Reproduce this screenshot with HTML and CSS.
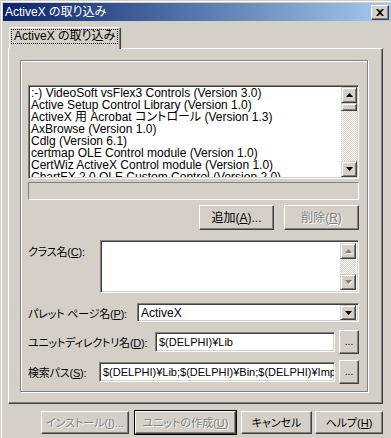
FILE: index.html
```html
<!DOCTYPE html>
<html>
<head>
    <title>ActiveX の取り込み</title>
    <meta charset="utf-8">
    <link rel="stylesheet" href="styles.css">
</head>
<body>
    <div class="window">
        <div class="titlebar">
            <span class="title">ActiveX の取り込み</span>
            <span class="close">
                <svg width="8" height="7" viewBox="0 0 8 7"><path d="M0 0h2l2 2 2-2h2L5 3.5 8 7H6L4 5 2 7H0l3-3.5z" fill="#000"/></svg>
            </span>
        </div>

        <div class="client">
            <div class="tabstrip">
                <div class="tab"><span class="focus">ActiveX の取り込み</span></div>
            </div>

            <div class="page">
                <div class="frame">
                    <div class="listbox">
                        <div class="items">
                            <div>:-) VideoSoft vsFlex3 Controls (Version 3.0)</div>
                            <div>Active Setup Control Library (Version 1.0)</div>
                            <div>ActiveX 用 Acrobat コントロール (Version 1.3)</div>
                            <div>AxBrowse (Version 1.0)</div>
                            <div>Cdlg (Version 6.1)</div>
                            <div>certmap OLE Control module (Version 1.0)</div>
                            <div>CertWiz ActiveX Control module (Version 1.0)</div>
                            <div>ChartFX 2.0 OLE Custom Control (Version 2.0)</div>
                        </div>
                        <div class="vscroll">
                            <div class="sbtn"><svg width="7" height="4" viewBox="0 0 7 4"><path d="M3.5 0L7 4H0z"/></svg></div>
                            <div class="thumb"></div>
                            <div class="track"></div>
                            <div class="sbtn"><svg width="7" height="4" viewBox="0 0 7 4"><path d="M0 0h7L3.5 4z"/></svg></div>
                        </div>
                    </div>

                    <div class="status"></div>

                    <div class="btn-row">
                        <button class="btn">追加(<u>A</u>)...</button>
                        <button class="btn" disabled>削除(<u>R</u>)</button>
                    </div>

                    <div class="field field-class">
                        <label class="lbl">クラス名(<u>C</u>):</label>
                        <div class="classbox">
                            <div class="items"></div>
                            <div class="vscroll">
                                <div class="sbtn off"><svg width="7" height="4" viewBox="0 0 7 4"><path d="M3.5 0L7 4H0z"/></svg></div>
                                <div class="track"></div>
                                <div class="sbtn off"><svg width="7" height="4" viewBox="0 0 7 4"><path d="M0 0h7L3.5 4z"/></svg></div>
                            </div>
                        </div>
                    </div>

                    <div class="field field-palette">
                        <label class="lbl">パレット ページ名(<u>P</u>):</label>
                        <div class="combo">
                            <span class="value">ActiveX</span>
                            <div class="sbtn"><svg width="7" height="4" viewBox="0 0 7 4"><path d="M0 0h7L3.5 4z"/></svg></div>
                        </div>
                    </div>

                    <div class="field field-path">
                        <label class="lbl">ユニットディレクトリ名(<u>D</u>):</label>
                        <div class="edit unit-edit">$(DELPHI)¥Lib</div>
                        <button class="btn dots">...</button>
                    </div>

                    <div class="field field-path">
                        <label class="lbl">検索パス(<u>S</u>):</label>
                        <div class="edit search-edit">$(DELPHI)¥Lib;$(DELPHI)¥Bin;$(DELPHI)¥Imp</div>
                        <button class="btn dots">...</button>
                    </div>
                </div>
            </div>

            <div class="actions">
                <button class="btn btn-install" disabled>インストール(<u>I</u>)...</button>
                <button class="btn btn-unit default" disabled>ユニットの作成(<u>U</u>)</button>
                <button class="btn btn-cancel">キャンセル</button>
                <button class="btn btn-help">ヘルプ(<u>H</u>)</button>
            </div>
        </div>
    </div>
</body>
</html>
```

FILE: styles.css
```css
body {
    margin: 0;
    background: #d4d0c8;
    font-family: 'Liberation Sans', 'Noto Sans CJK JP', sans-serif;
    font-size: 12px;
    font-feature-settings: "palt";
    color: #000;
}
.window {
    width: 391px;
    height: 438px;
    box-sizing: border-box;
    border-left: 1px solid #d4d0c8;
    border-top: 1px solid #d4d0c8;
    padding: 2px 0 0 2px;
    box-shadow: inset 1px 1px #fff;
    overflow: hidden;
}
.titlebar {
    height: 18px;
    display: flex;
    align-items: center;
    justify-content: space-between;
    background: linear-gradient(90deg, #0a246a 0%, #a6caf0 100%);
    padding: 0 2px 0 2px;
}
.title {
    color: #fff;
    line-height: 18px;
}
.close {
    width: 16px;
    height: 13px;
    display: flex;
    align-items: center;
    justify-content: center;
    background: #d4d0c8;
    border: 1px solid;
    border-color: #fff #404040 #404040 #fff;
    box-shadow: inset -1px -1px #808080;
}
.client {
    padding-left: 5px;
}
.tabstrip {
    display: flex;
    margin-top: 6px;
    padding-left: 1px;
}
.tab {
    position: relative;
    z-index: 1;
    height: 19px;
    margin-bottom: -1px;
    padding: 2px 3px 0 2px;
    background: #d4d0c8;
    border: 1px solid;
    border-color: #fff #404040 transparent #fff;
    border-bottom: none;
    border-radius: 2px 2px 0 0;
    box-shadow: inset -1px 0 #808080;
}
.focus {
    display: block;
    padding: 0 2px;
    line-height: 13px;
    outline: 1px dotted #000;
}
.page {
    width: 375px;
    box-sizing: border-box;
    border: 1px solid;
    border-color: #fff #404040 #404040 #fff;
    box-shadow: inset -1px -1px #808080;
    padding: 11px 14px 11px 11px;
}
.frame {
    border: 1px solid #808080;
    box-shadow: inset 1px 1px #fff, 1px 1px #fff;
    padding: 24px 8px 7px 7px;
    display: flex;
    flex-direction: column;
}
.listbox, .classbox, .edit, .combo {
    background: #fff;
    border: 1px solid;
    border-color: #808080 #fff #fff #808080;
    box-shadow: inset 1px 1px #404040, inset -1px -1px #d4d0c8;
    box-sizing: border-box;
}
.listbox {
    height: 94px;
    display: flex;
    padding: 1px;
    overflow: hidden;
}
.items {
    flex: 1;
    padding-left: 1px;
    line-height: 12px;
    white-space: nowrap;
    overflow: hidden;
}
.vscroll {
    width: 16px;
    display: flex;
    flex-direction: column;
}
.sbtn {
    width: 16px;
    height: 16px;
    box-sizing: border-box;
    flex-shrink: 0;
    display: flex;
    align-items: center;
    justify-content: center;
    background: #d4d0c8;
    border: 1px solid;
    border-color: #d4d0c8 #404040 #404040 #d4d0c8;
    box-shadow: inset 1px 1px #fff, inset -1px -1px #808080;
}
.sbtn svg {
    fill: #000;
}
.sbtn.off svg {
    fill: #808080;
    filter: drop-shadow(1px 1px 0 #fff);
}
.thumb {
    height: 8px;
    flex-shrink: 0;
    box-sizing: border-box;
    background: #d4d0c8;
    border: 1px solid;
    border-color: #d4d0c8 #404040 #404040 #d4d0c8;
    box-shadow: inset 1px 1px #fff, inset -1px -1px #808080;
}
.track {
    flex: 1;
    background: repeating-conic-gradient(#fff 0 25%, #d4d0c8 0 50%) 0 0 / 2px 2px;
}
.status {
    height: 18px;
    margin-top: 3px;
    box-sizing: border-box;
    border: 1px solid;
    border-color: #808080 #fff #fff #808080;
}
.btn {
    font: inherit;
    font-size: 11px;
    color: #000;
    background: #d4d0c8;
    box-sizing: border-box;
    border: 1px solid;
    border-color: #fff #404040 #404040 #fff;
    box-shadow: inset -1px -1px #808080, inset 1px 1px #d4d0c8;
    padding: 0;
    line-height: 12px;
    white-space: nowrap;
}
.btn:disabled {
    color: #808080;
    text-shadow: 1px 1px 0 #fff;
}
.btn u {
    text-decoration: underline;
}
.btn-row {
    display: flex;
    justify-content: flex-end;
    gap: 10px;
    margin-top: 5px;
}
.btn-row .btn {
    width: 75px;
    height: 25px;
    font-size: 12px;
}
.field {
    display: flex;
    align-items: center;
    gap: 3px;
}
.lbl {
    white-space: nowrap;
    flex: 1 1 0;
    min-width: 0;
    font-size: 11px;
    letter-spacing: -0.2px;
}
.field-class {
    align-items: flex-start;
    margin-top: 10px;
}
.field-class .lbl {
    margin-top: 3px;
}
.classbox {
    width: 259px;
    height: 53px;
    display: flex;
    padding: 2px;
}
.field-palette {
    margin-top: 10px;
    height: 19px;
}
.combo {
    width: 222px;
    height: 19px;
    display: flex;
    align-items: center;
    padding: 1px 2px 1px 3px;
}
.combo .value {
    flex: 1;
    background: #fff;
}
.combo .sbtn {
    height: 15px;
}
.field-path {
    height: 24px;
    margin-top: 8px;
}
.field-path + .field-path {
    margin-top: 6px;
}
.edit {
    height: 20px;
    line-height: 16px;
    padding: 1px 3px;
    font-size: 11px;
    white-space: nowrap;
    overflow: hidden;
}
.unit-edit {
    width: 180px;
}
.search-edit {
    width: 236px;
}
.dots {
    width: 20px;
    height: 24px;
    margin-left: 1px;
    font-size: 10px;
}
.actions {
    display: flex;
    margin-top: 7px;
    padding-left: 33px;
    gap: 6px;
}
.actions .btn {
    height: 23px;
}
.btn-install {
    width: 88px;
}
.btn-unit {
    width: 101px;
    margin-right: -1px;
}
.btn.default {
    outline: 1px solid #000;
    outline-offset: 0;
    border-color: #fff #404040 #404040 #fff;
}
.btn-cancel {
    width: 71px;
}
.btn-help {
    width: 68px;
    margin-left: -3px;
}
```
